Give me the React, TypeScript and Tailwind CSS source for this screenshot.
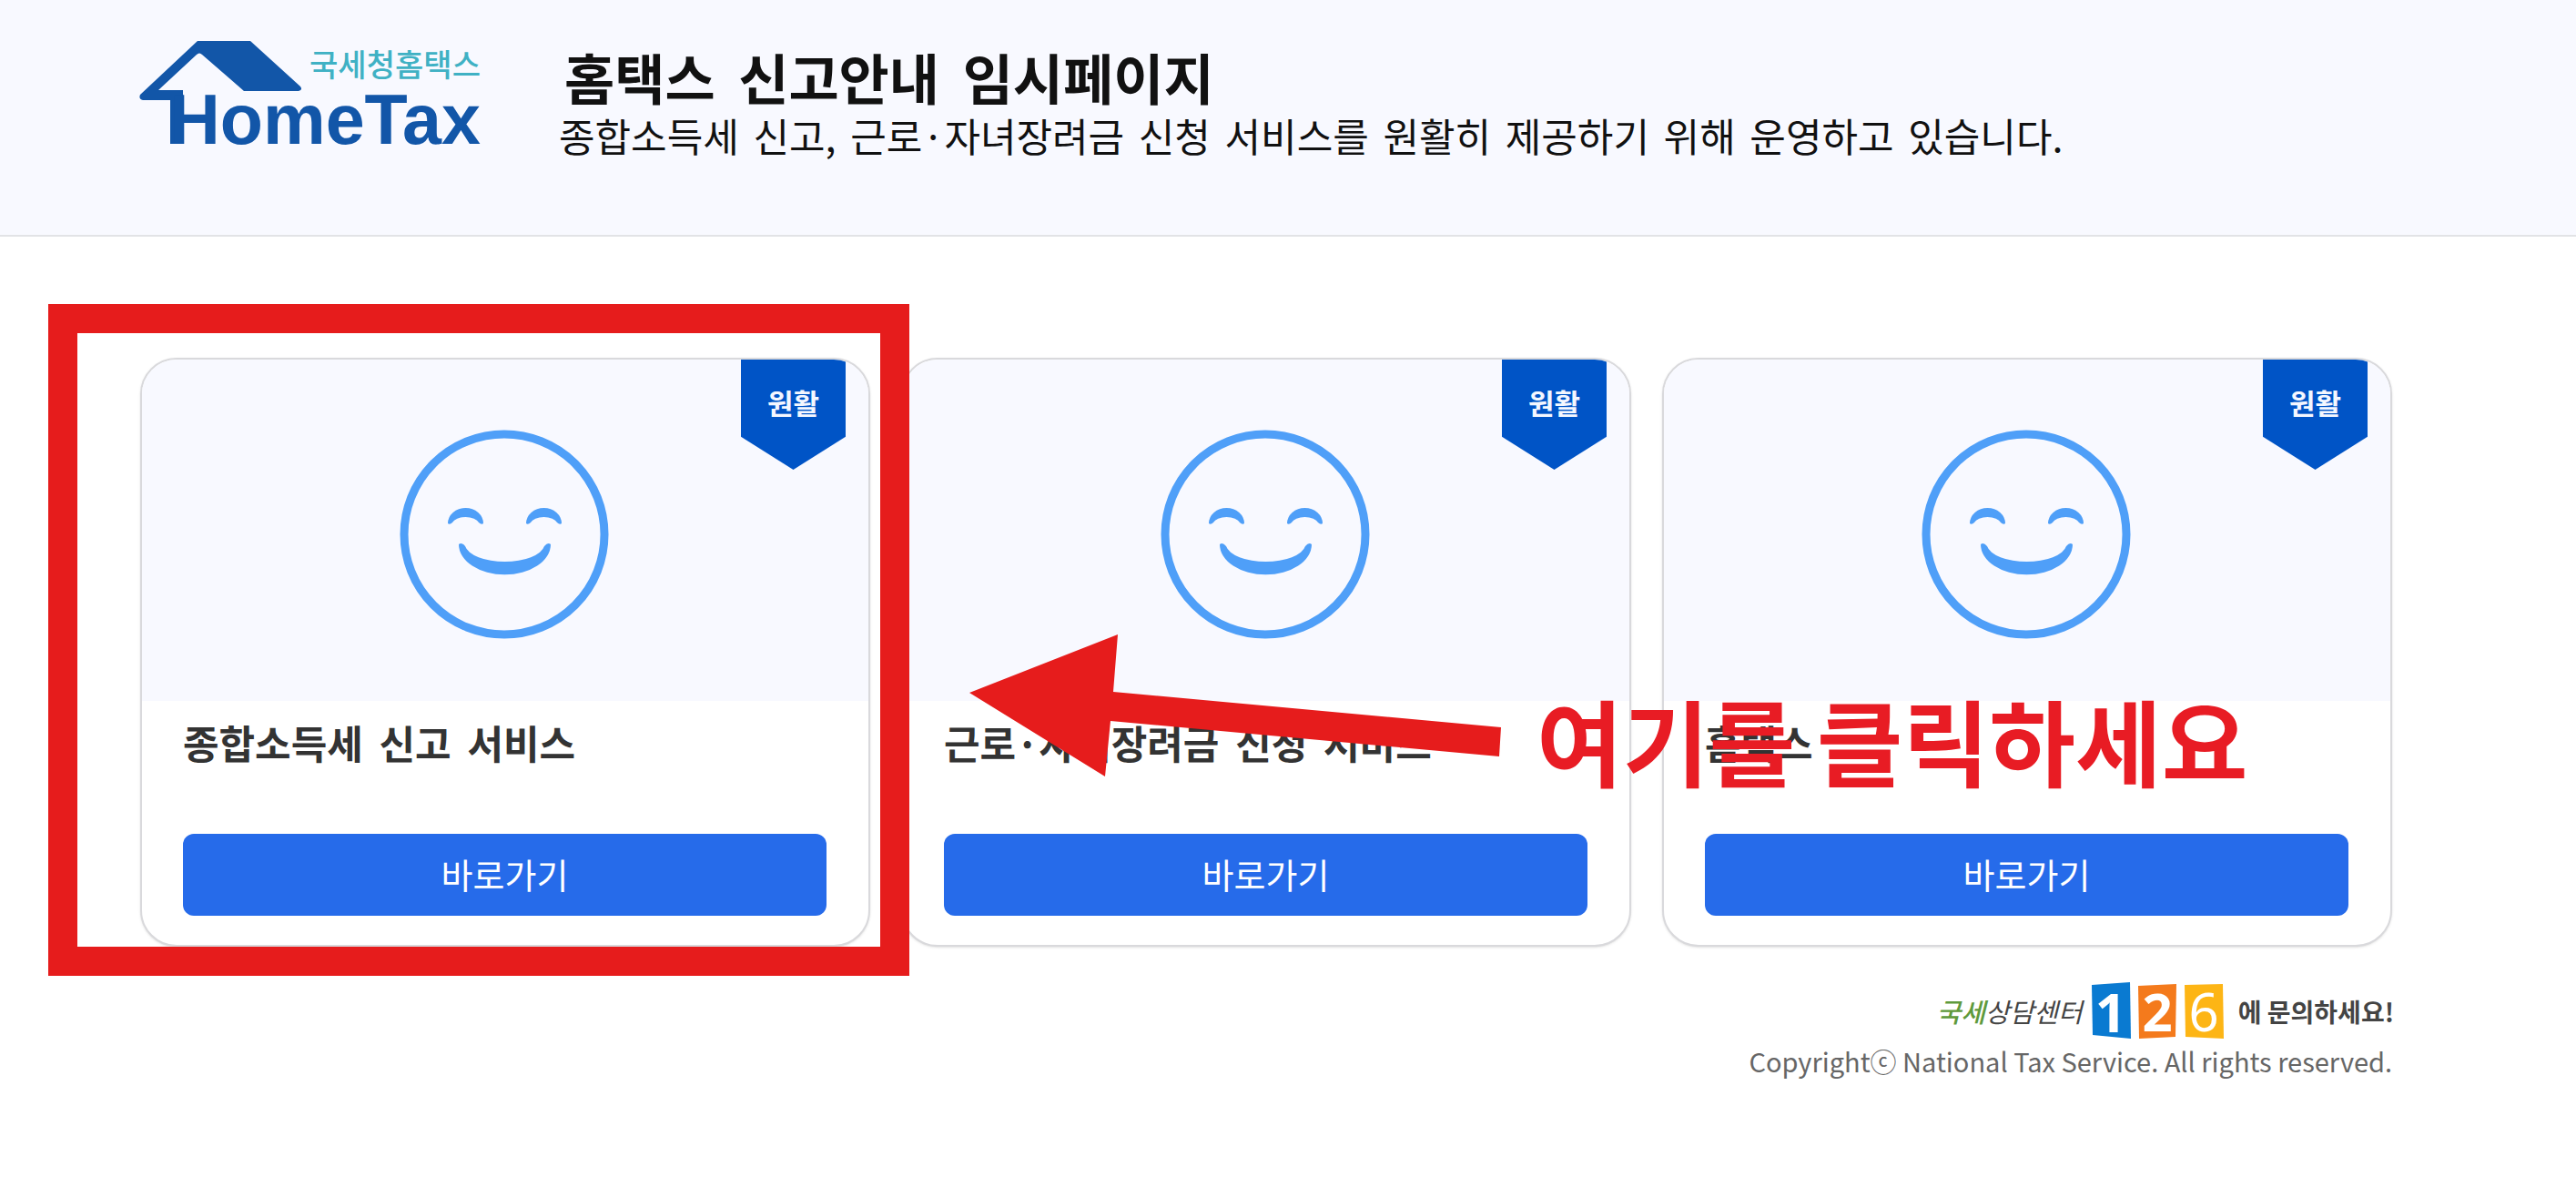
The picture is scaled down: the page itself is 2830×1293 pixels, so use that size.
const cards = ["종합소득세 신고 서비스", "근로·자녀장려금 신청 서비스", "홈택스"];

function HomeTaxLogo() {
  return (
    <svg width="390" height="140" viewBox="0 0 390 140" className="shrink-0">
      <path
        d="M1 60 L64 1 L122 1 L177 51 Q180 55 175 56 L115 56 L69 16 Q66 13 63 16 L21 55 L48 55 L48 66 L4 66 Q-1 65 1 60 Z"
        fill="#1256a8"
      />
      <rect x="34" y="60" width="14" height="54" fill="#1256a8" />
      <text x="187" y="40" fontSize="34" fontWeight="500" fill="#3fb1c4" fontFamily="'Noto Sans CJK KR', sans-serif" textLength="188" lengthAdjust="spacingAndGlyphs">
        국세청홈택스
      </text>
      <text x="33" y="114" fontSize="78" fontWeight="700" fill="#1256a8" fontFamily="'Liberation Sans', sans-serif" textLength="342" lengthAdjust="spacingAndGlyphs">
        HomeTax
      </text>
    </svg>
  );
}

function Smiley() {
  return (
    <svg width="240" height="240" viewBox="0 0 240 240" fill="#4f9ff8">
      <circle cx="120" cy="120" r="110" fill="none" stroke="#4f9ff8" strokeWidth="9" />
      <path d="M58 108 A19.5 17 0 0 1 97 108 Q95 110 92 107 A15 8 0 0 0 63 107 Q60 110 58 108 Z" />
      <path d="M144 108 A19.5 17 0 0 1 183 108 Q181 110 178 107 A15 8 0 0 0 149 107 Q146 110 144 108 Z" />
      <path d="M70 131 A50 33 0 0 0 171 131 Q168 128 164 133 A44 20 0 0 1 77 133 Q73 128 70 131 Z" />
    </svg>
  );
}

function Card({ title }: { title: string }) {
  return (
    <div className="w-[802px] h-[647px] shrink-0 rounded-[40px] border-2 border-[#d9d9dc] overflow-hidden bg-white shadow-sm flex flex-col">
      <div className="relative h-[375px] bg-[#f8f9ff] flex items-center justify-center pt-[8px] pr-[3px]">
        <Smiley />
        <div className="absolute top-0 right-[25px] w-[115px] h-[121px] bg-[#0054c6] [clip-path:polygon(0_0,100%_0,100%_70%,50%_100%,0_70%)] flex justify-center pt-[24px]">
          <span className="text-[31px] leading-[46px] font-bold text-[#f4f7ff]">원활</span>
        </div>
      </div>
      <div className="flex-1 flex flex-col justify-between pl-[45px] pr-[46px] pt-[17px] pb-[32px]">
        <h2 className="text-[43px] leading-[56px] font-bold text-[#333] [word-spacing:8px]">{title}</h2>
        <button className="h-[90px] w-full rounded-[12px] bg-[#266bea] text-white text-[38px] font-normal pb-[4px]">바로가기</button>
      </div>
    </div>
  );
}

function Footer126() {
  return (
    <div className="flex items-center h-[62px] -mr-[2px]">
      <span className="text-[29px] font-medium text-[#5f9a3c] italic">국세</span>
      <span className="text-[29px] font-normal text-[#444] italic mr-[10px]">상담센터</span>
      <svg width="146" height="90" viewBox="0 0 146 90" className="shrink-0 -my-[14px]">
        <path d="M0 16 L42 13 L43 75 L1 71 Z" fill="#0a7ad1" />
        <path d="M51 17 L93 15 L92 73 L52 75 Z" fill="#f47a1c" />
        <path d="M102 16 L144 15 L145 75 L103 73 Z" fill="#fdb515" />
        <text x="21" y="68" textAnchor="middle" fontSize="60" fontWeight="700" fill="#fff" fontFamily="'Noto Sans', sans-serif">1</text>
        <text x="72" y="67" textAnchor="middle" fontSize="58" fontWeight="700" fill="#fff" fontFamily="'Noto Sans', sans-serif">2</text>
        <text x="123" y="67" textAnchor="middle" fontSize="58" fontWeight="400" fill="#fff" fontFamily="'Noto Sans', sans-serif">6</text>
      </svg>
      <span className="ml-[15px] text-[28px] font-bold text-[#444]">에 문의하세요!</span>
    </div>
  );
}

export default function App() {
  return (
    <div className="relative min-h-[1293px] w-[2830px] overflow-hidden bg-white font-['Noto_Sans_CJK_KR','Noto_Sans',sans-serif]">
      <header className="h-[260px] border-b-2 border-[#e2e3e6] bg-[#f8f9ff] flex pl-[153px] pt-[44px]">
        <HomeTaxLogo />
        <div className="ml-[73px] mt-[4px]">
          <h1 className="pl-[4px] text-[60px] leading-[72px] font-bold text-[#111] [word-spacing:12px]">홈택스 신고안내 임시페이지</h1>
          <p className="-ml-[2px] text-[43px] leading-[56px] text-[#111] [word-spacing:6px]">
            종합소득세 신고, 근로·자녀장려금 신청 서비스를 원활히 제공하기 위해 운영하고 있습니다.
          </p>
        </div>
      </header>

      <main className="pt-[133px] pl-[154px] pr-[202px]">
        <div className="flex gap-[34px]">
          {cards.map((title) => (
            <Card key={title} title={title} />
          ))}
        </div>
        <footer className="mt-[40px] flex flex-col items-end">
          <Footer126 />
          <p className="mt-[3px] text-[29px] leading-[40px] text-[#666]">Copyrightⓒ National Tax Service. All rights reserved.</p>
        </footer>
      </main>

      {/* annotation drawn on top of the page */}
      <div className="absolute left-[53px] top-[334px] w-[946px] h-[738px] border-[32px] border-[#e61c1c]" />
      <svg className="absolute left-[1060px] top-[690px]" width="600" height="170" viewBox="0 0 600 170">
        <polygon points="5,71 168,7 163,70 589,109 587,141 160,102 154,163" fill="#e61c1c" />
      </svg>
      <div className="absolute left-[1688px] top-[748px] text-[103px] leading-[130px] font-bold text-[#e81c24] whitespace-nowrap">여기를 클릭하세요</div>
    </div>
  );
}
